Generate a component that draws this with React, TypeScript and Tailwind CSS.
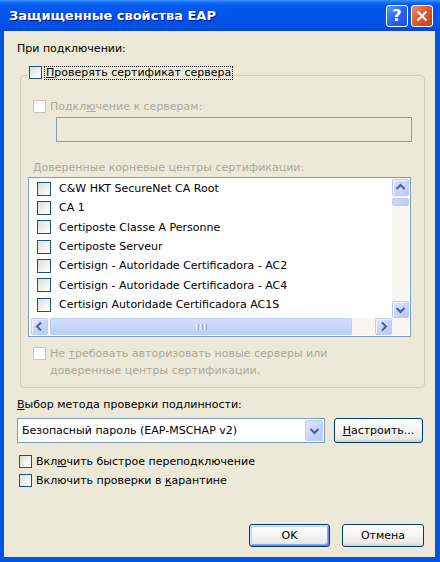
import React from "react";

const CERTS: string[] = [
  "C&W HKT SecureNet CA Root",
  "CA 1",
  "Certiposte Classe A Personne",
  "Certiposte Serveur",
  "Certisign - Autoridade Certificadora - AC2",
  "Certisign - Autoridade Certificadora - AC4",
  "Certisign Autoridade Certificadora AC1S",
];

function Box({ disabled }: { disabled?: boolean }) {
  return (
    <span
      className={
        disabled
          ? "block h-[13px] w-[13px] shrink-0 border border-[#CAC8BB] bg-white"
          : "block h-[13px] w-[13px] shrink-0 border border-[#1C5180] bg-[linear-gradient(135deg,#DCDCD7_0%,#F4F4F2_60%,#FFFFFF_100%)]"
      }
    />
  );
}

function ListBox() {
  return (
    <span className="block h-[14px] w-[14px] shrink-0 border border-[#1C5180] bg-[linear-gradient(135deg,#DCDCD7_0%,#F4F4F2_60%,#FFFFFF_100%)]" />
  );
}

type Dir = "up" | "down" | "left" | "right";

const ARROWS: Record<Dir, string> = {
  up: "M4.5 10 L8.5 6 L12.5 10",
  down: "M4.5 7 L8.5 11 L12.5 7",
  left: "M10 4.5 L6 8.5 L10 12.5",
  right: "M7 4.5 L11 8.5 L7 12.5",
};

function ScrollBtn({ dir }: { dir: Dir }) {
  return (
    <div className="h-[17px] w-[17px] shrink-0 rounded-[2px] border border-[#BACDF7] bg-[linear-gradient(135deg,#DCE6FE_0%,#C6D6FC_50%,#B5C9F7_100%)] shadow-[inset_1px_1px_0_#EEF3FF]">
      <svg width="15" height="15" viewBox="1 1 15 15">
        <path d={ARROWS[dir]} fill="none" stroke="#4D6185" strokeWidth="2" />
      </svg>
    </div>
  );
}

function CertList() {
  return (
    <div className="ml-[7px] mt-[3px] h-[160px] w-[383px] border border-[#7F9DB9] bg-white p-[1px]">
      <div className="grid h-full grid-cols-[1fr_17px] grid-rows-[1fr_17px]">
        <div className="overflow-hidden text-[11px] leading-[19.33px] text-black">
          {CERTS.map((c) => (
            <div key={c} className="flex h-[19.33px] items-center whitespace-nowrap pl-[7px]">
              <ListBox />
              <span className="ml-[8px]">{c}</span>
            </div>
          ))}
        </div>
        <div className="flex flex-col bg-[#F7F6F1]">
          <ScrollBtn dir="up" />
          <div className="mt-[2px] h-[8px] w-[17px] rounded-[2px] border border-[#BACDF7] bg-[linear-gradient(to_right,#CBD9FD,#BBCEF9)]" />
          <div className="flex-1" />
          <ScrollBtn dir="down" />
        </div>
        <div className="flex items-center bg-[#F7F6F1] pl-[1px]">
          <ScrollBtn dir="left" />
          <div className="ml-[2px] flex h-[17px] w-[302px] items-center justify-center rounded-[2px] border border-[#BACDF7] bg-[linear-gradient(to_bottom,#D3DFFD,#BBCEF9)]">
            <div className="flex gap-[1px]">
              <span className="block h-[6px] w-[1px] bg-[#EEF4FE]" />
              <span className="block h-[6px] w-[1px] bg-[#8CB0F8]" />
              <span className="block h-[6px] w-[1px] bg-[#EEF4FE]" />
              <span className="block h-[6px] w-[1px] bg-[#8CB0F8]" />
              <span className="block h-[6px] w-[1px] bg-[#EEF4FE]" />
              <span className="block h-[6px] w-[1px] bg-[#8CB0F8]" />
            </div>
          </div>
          <div className="flex-1" />
          <ScrollBtn dir="right" />
        </div>
        <div className="bg-[#F7F6F1]" />
      </div>
    </div>
  );
}

function XpButton({ children, isDefault, w }: { children: React.ReactNode; isDefault?: boolean; w: string }) {
  return (
    <div
      className={[
        "flex h-[23px] items-center justify-center rounded-[3px] border border-[#003C74] bg-[linear-gradient(to_bottom,#FFFFFF_0%,#F4F4F0_50%,#ECEBE6_85%,#D6D0C5_100%)]",
        w,
        isDefault
          ? "shadow-[inset_1px_1px_0_#CEE7FF,inset_-1px_-1px_0_#6982EE,inset_2px_2px_0_#BCD4F6,inset_-2px_-2px_0_#89ADE4]"
          : "",
      ].join(" ")}
    >
      {children}
    </div>
  );
}

function TitleBar() {
  return (
    <div className="flex h-[31px] shrink-0 items-center bg-[linear-gradient(to_bottom,#3D93FF_0%,#0A66F5_10%,#0058EE_22%,#0054E8_60%,#0052E4_85%,#0046D6_100%)] pl-[9px] pr-[7px]">
      <span className="font-['DejaVu_Sans',sans-serif] text-[13px] font-bold text-white [text-shadow:1px_1px_0_#0F1089]">
        Защищенные свойства EAP
      </span>
      <div className="ml-auto flex gap-[3px]">
        <div className="flex h-[22px] w-[22px] items-center justify-center rounded-[3px] border border-white bg-[linear-gradient(135deg,#5B9BFF_0%,#2568F0_50%,#1850DC_100%)]">
          <span className="font-['DejaVu_Sans',sans-serif] text-[16px] font-bold leading-none text-white">?</span>
        </div>
        <div className="flex h-[22px] w-[22px] items-center justify-center rounded-[3px] border border-white bg-[linear-gradient(135deg,#EE8E6E_0%,#E05A34_45%,#C83E18_100%)]">
          <svg width="12" height="12" viewBox="0 0 12 12">
            <path d="M1.5 1.5 L10.5 10.5 M10.5 1.5 L1.5 10.5" stroke="white" strokeWidth="2.2" />
          </svg>
        </div>
      </div>
    </div>
  );
}

export default function App() {
  return (
    <div className="flex h-[562px] w-[440px] flex-col bg-[#0054E3] font-['DejaVu_Sans',sans-serif]">
      <TitleBar />
      <div className="mb-[5px] ml-[4px] mr-[5px] flex flex-1 flex-col bg-[#ECE9D8] pb-[10px] pl-[13px] pr-[10px] pt-[11px] text-[11px] leading-[13px] text-black">
        <div>При подключении:</div>

        <fieldset className="ml-[3px] mt-[11px] rounded-[4px] border border-[#D0D0BF] pb-[8px]">
          <legend className="ml-[8px] flex h-[18px] items-start">
            <Box />
            <span className="ml-[2px] border border-dotted border-black px-[1px] leading-[12px]">
              <span className="underline">П</span>роверять сертификат сервера
            </span>
          </legend>

          <div className="ml-[12px] mt-[16px] flex items-center text-[#ACA899]">
            <Box disabled />
            <span className="ml-[4px]">
              Подкл<span className="underline">ю</span>чение к серверам:
            </span>
          </div>
          <div className="ml-[35px] mt-[4px] h-[25px] w-[356px] border border-[#7F9DB9]" />

          <div className="ml-[12px] mt-[19px] text-[#ACA899]">
            <span className="underline">Д</span>оверенные корневые центры сертификации:
          </div>
          <CertList />

          <div className="ml-[12px] mt-[8px] flex items-start text-[#ACA899]">
            <span className="mt-[2px]">
              <Box disabled />
            </span>
            <span className="ml-[4px] leading-[17px]">
              Не <span className="underline">т</span>ребовать авторизовать новые серверы или
              <br />
              доверенные центры сертификации.
            </span>
          </div>
        </fieldset>

        <div className="mt-[10px]">
          <span className="underline">В</span>ыбор метода проверки подлинности:
        </div>
        <div className="mt-[7px] flex items-center">
          <div className="flex h-[25px] w-[308px] items-stretch border border-[#7F9DB9] bg-white py-[1px] pr-[1px]">
            <span className="flex flex-1 items-center pl-[4px]">Безопасный пароль (EAP-MSCHAP v2)</span>
            <ScrollDrop />
          </div>
          <div className="ml-[9px]">
            <XpButton w="w-[89px] h-[25px]">
              <span>
                <span className="underline">Н</span>астроить...
              </span>
            </XpButton>
          </div>
        </div>

        <div className="ml-[2px] mt-[12px] flex items-center">
          <Box />
          <span className="ml-[4px]">
            Вкл<span className="underline">ю</span>чить быстрое переподключение
          </span>
        </div>
        <div className="ml-[2px] mt-[6px] flex items-center">
          <Box />
          <span className="ml-[4px]">
            Включить проверки в <span className="underline">к</span>арантине
          </span>
        </div>

        <div className="mt-auto flex justify-end gap-[12px] pr-[1px]">
          <XpButton w="w-[81px]" isDefault>
            OK
          </XpButton>
          <XpButton w="w-[82px]">Отмена</XpButton>
        </div>
      </div>
    </div>
  );
}

function ScrollDrop() {
  return (
    <div className="flex w-[18px] items-center justify-center rounded-[2px] border border-[#BACDF7] bg-[linear-gradient(135deg,#DCE6FE_0%,#C6D6FC_50%,#B5C9F7_100%)]">
      <svg width="11" height="8" viewBox="0 0 11 8">
        <path d="M1.5 2 L5.5 6 L9.5 2" fill="none" stroke="#4D6185" strokeWidth="2" />
      </svg>
    </div>
  );
}
